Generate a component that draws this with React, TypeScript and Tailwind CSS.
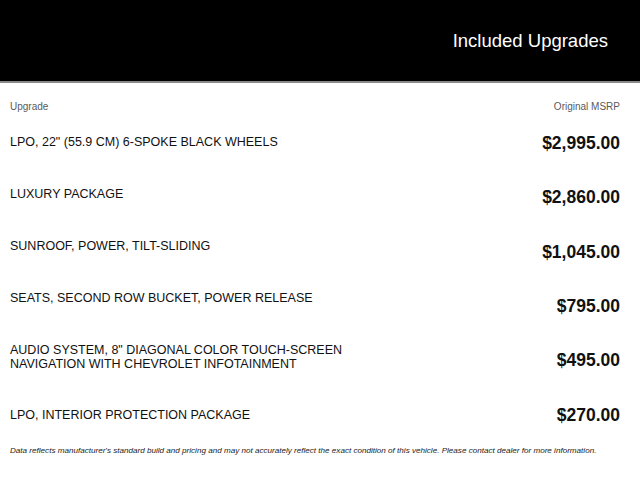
import React from "react";

const rows: { name: string[]; price: string; off: string; mb: string }[] = [
  { name: ["LPO, 22\" (55.9 CM) 6-SPOKE BLACK WHEELS"], price: "$2,995.00", off: "mt-[-2px]", mb: "h-[52px]" },
  { name: ["LUXURY PACKAGE"], price: "$2,860.00", off: "mt-[0px]", mb: "h-[52px]" },
  { name: ["SUNROOF, POWER, TILT-SLIDING"], price: "$1,045.00", off: "mt-[3px]", mb: "h-[52px]" },
  { name: ["SEATS, SECOND ROW BUCKET, POWER RELEASE"], price: "$795.00", off: "mt-[5px]", mb: "h-[52px]" },
  {
    name: ["AUDIO SYSTEM, 8\" DIAGONAL COLOR TOUCH-SCREEN", "NAVIGATION WITH CHEVROLET INFOTAINMENT"],
    price: "$495.00",
    off: "mt-[7px]",
    mb: "h-[65px]",
  },
  { name: ["LPO, INTERIOR PROTECTION PACKAGE"], price: "$270.00", off: "mt-[-3px]", mb: "h-[38px]" },
];

export default function App() {
  return (
    <div className="w-[640px] h-[480px] bg-white overflow-hidden" style={{ fontFamily: '"Liberation Sans", Arial, sans-serif' }}>
      <div className="h-[83px] bg-black border-b-2 border-[#8a8a8a] flex items-center justify-end pr-[32px]">
        <span className="text-white text-[18.5px] leading-none mt-[2px]">Included Upgrades</span>
      </div>
      <div className="flex justify-between pl-[10px] pr-[20px] pt-[18px] text-[10px] leading-[12px] text-[#5a5a5a]">
        <span>Upgrade</span>
        <span>Original MSRP</span>
      </div>
      <div className="flex flex-col pl-[10px] pr-[20px] pt-[22px]">
        {rows.map((r, i) => (
          <div key={i} className={`flex justify-between items-start ${r.mb}`}>
            <div className="text-[12.5px] leading-[14px] text-[#111]">
              {r.name.map((l, j) => (
                <div key={j}>{l}</div>
              ))}
            </div>
            <div className={`text-[17.5px] leading-[20px] font-bold text-[#111] ${r.off}`}>{r.price}</div>
          </div>
        ))}
      </div>
      <div className="pl-[10px] text-[8.1px] leading-[10px] italic text-[#222]">
        Data reflects manufacturer's standard build and pricing and may not accurately reflect the exact condition of this vehicle. Please contact dealer for more information.
      </div>
    </div>
  );
}
